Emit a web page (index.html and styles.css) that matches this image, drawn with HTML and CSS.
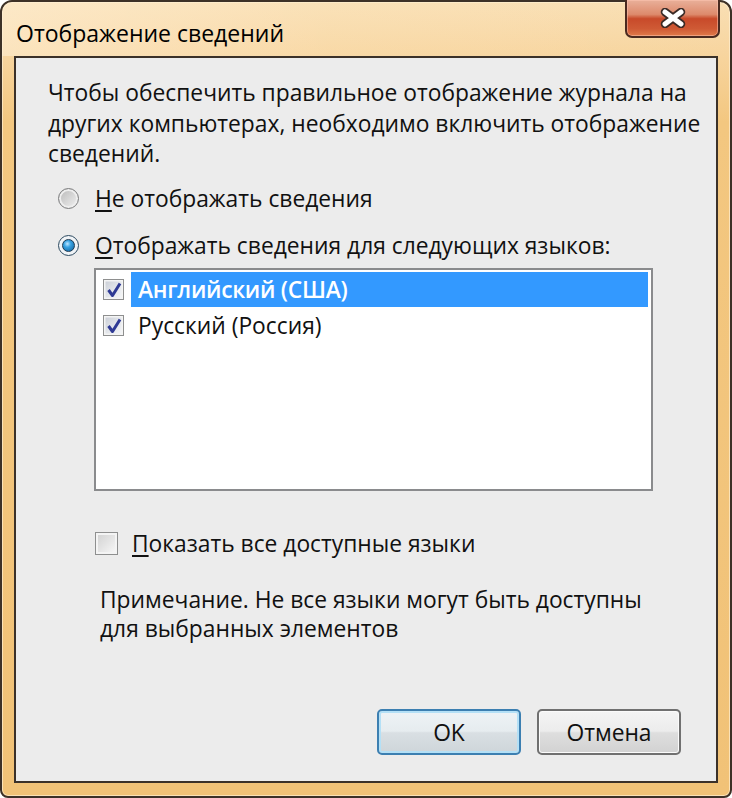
FILE: index.html
```html
<!DOCTYPE html>
<html lang="ru">
<head>
<meta charset="utf-8">
<title>Отображение сведений</title>
<link rel="stylesheet" href="styles.css">
</head>
<body>
<div class="window">
  <div class="titlebar">
    <div class="title">Отображение сведений</div>
    <div class="close">
      <svg width="28" height="20" viewBox="0 0 28 20">
        <path d="M6 4 L22 16 M22 4 L6 16" stroke="#3a2a26" stroke-width="8.5" stroke-linecap="round"/>
        <path d="M6 4 L22 16 M22 4 L6 16" stroke="#ffffff" stroke-width="5" stroke-linecap="round"/>
      </svg>
    </div>
  </div>
  <div class="client">
    <p class="intro">Чтобы обеспечить правильное отображение журнала на<br>других компьютерах, необходимо включить отображение<br>сведений.</p>
    <div class="radio-row first">
      <span class="radio"></span>
      <span class="label"><u>Н</u>е отображать сведения</span>
    </div>
    <div class="radio-row second">
      <span class="radio checked"><span class="dot"></span></span>
      <span class="label"><u>О</u>тображать сведения для следующих языков:</span>
    </div>
    <div class="listbox">
      <div class="item selected">
        <span class="cb checked"><svg width="16" height="16" viewBox="0 0 16 16"><path d="M2.5 8 L6.5 13.5 L14 1.5" fill="none" stroke="#2f3a94" stroke-width="3" stroke-linejoin="round"/></svg></span>
        <span class="item-text">Английский (США)</span>
      </div>
      <div class="item">
        <span class="cb checked"><svg width="16" height="16" viewBox="0 0 16 16"><path d="M2.5 8 L6.5 13.5 L14 1.5" fill="none" stroke="#2f3a94" stroke-width="3" stroke-linejoin="round"/></svg></span>
        <span class="item-text">Русский (Россия)</span>
      </div>
    </div>
    <div class="check-row">
      <span class="cb"></span>
      <span class="label"><u>П</u>оказать все доступные языки</span>
    </div>
    <p class="note">Примечание. Не все языки могут быть доступны<br>для выбранных элементов</p>
    <div class="buttons">
      <div class="btn default">OK</div>
      <div class="btn">Отмена</div>
    </div>
  </div>
</div>
</body>
</html>
```

FILE: styles.css
```css
html, body {
  margin: 0;
  padding: 0;
  background: #ffffff;
}
body {
  width: 732px;
  height: 798px;
  overflow: hidden;
  font-family: "Open Sans", "Noto Sans", "DejaVu Sans", sans-serif;
  font-size: 22.8px;
  color: #111;
}
.window {
  box-sizing: border-box;
  width: 732px;
  height: 798px;
  border: 2px solid #3d3127;
  border-radius: 12px 12px 8px 8px;
  background: linear-gradient(180deg, #f9dfb4 0px, #f7d49d 56px, #f3c780 120px, #f1c277 100%);
  box-shadow: inset 0 0 0 1px rgba(255,240,210,0.7);
  padding: 0 12px 13px 12px;
  display: flex;
  flex-direction: column;
}
.titlebar {
  height: 54px;
  display: flex;
  align-items: flex-start;
  background: linear-gradient(90deg, rgba(255,240,215,0.55) 0%, rgba(255,235,200,0.2) 45%, rgba(255,255,255,0) 100%);
  margin: 0 -12px;
  padding: 0 10px 0 14px;
  border-radius: 10px 10px 0 0;
}
.title {
  font-size: 23px;
  line-height: 28px;
  margin-top: 17px;
  color: #000;
}
.close {
  margin-left: auto;
  margin-top: -2px;
  width: 95px;
  height: 38px;
  box-sizing: border-box;
  border: 2px solid #4a2a20;
  border-top: none;
  border-radius: 0 0 7px 7px;
  background: linear-gradient(180deg, #e9b09a 0%, #dd8a6c 40%, #c84a2a 52%, #cf5a35 80%, #e07a4a 100%);
  box-shadow: inset 0 0 0 1px rgba(255,200,180,0.5);
  display: flex;
  align-items: center;
  justify-content: center;
}
.client {
  flex: 1;
  box-sizing: border-box;
  border: 2px solid #3b3129;
  background: #ececec;
  display: flex;
  flex-direction: column;
  padding: 20px 0 26px 0;
}
.intro {
  margin: 0 0 0 32px;
  line-height: 30.5px;
  white-space: nowrap;
}
.radio-row {
  display: flex;
  align-items: center;
  height: 30px;
  margin-left: 42px;
}
.radio-row.first { margin-top: 14px; }
.radio-row.second { margin-top: 17px; }
.radio-row .label { margin-left: 16px; }
.radio {
  box-sizing: border-box;
  width: 21px;
  height: 21px;
  border-radius: 50%;
  border: 1.5px solid #7c7d7e;
  background: linear-gradient(135deg, #b8b8b8 0%, #d2d2d2 45%, #f2f2f2 100%);
  box-shadow: inset 0 0 0 2px #eeeeee;
  display: flex;
  align-items: center;
  justify-content: center;
}
.radio.checked {
  border-color: #2c4a60;
  background: radial-gradient(circle, #e8edf2 0%, #f6f8fa 100%);
  box-shadow: none;
}
.radio .dot {
  width: 11px;
  height: 11px;
  border-radius: 50%;
  border: 1.5px solid #1c3a52;
  background: radial-gradient(circle at 40% 35%, #bfe6ff 0%, #37a2e2 35%, #0f5d98 100%);
}
u {
  text-decoration: underline;
  text-underline-offset: 3px;
  text-decoration-thickness: 1.5px;
}
.listbox {
  margin: 7px 0 0 78px;
  width: 559px;
  height: 223px;
  box-sizing: border-box;
  border: 2px solid #8a8b8d;
  background: #ffffff;
  padding: 2px 1px;
}
.item {
  display: flex;
  align-items: center;
  height: 36px;
}
.item .cb {
  margin-left: 6px;
}
.item-text {
  flex: 1;
  height: 35px;
  line-height: 35px;
  margin-left: 7px;
  padding-left: 7px;
  margin-right: 2px;
}
.item.selected .item-text {
  background: #3399ff;
  color: #ffffff;
  font-weight: 600;
  letter-spacing: -0.3px;
}
.cb {
  box-sizing: border-box;
  width: 21px;
  height: 21px;
  border: 1.5px solid #8e8f8f;
  background: linear-gradient(135deg, #d0d0d0 0%, #e4e4e4 50%, #fafafa 100%);
  box-shadow: inset 0 0 0 2px #f4f4f4;
  display: flex;
  align-items: center;
  justify-content: center;
}
.cb.checked {
  background: linear-gradient(135deg, #c8ccd4 0%, #e2e5ea 50%, #f6f7f9 100%);
  box-shadow: inset 0 0 0 1.5px #f4f4f4;
}
.check-row {
  display: flex;
  align-items: center;
  height: 30px;
  margin: 38px 0 0 79px;
}
.check-row .cb { width: 23px; height: 23px; }
.check-row .label { margin-left: 14px; }
.note {
  margin: 26px 0 0 84px;
  line-height: 29px;
  white-space: nowrap;
}
.buttons {
  margin-top: auto;
  display: flex;
  justify-content: flex-end;
  gap: 16px;
  padding-right: 35px;
}
.btn {
  box-sizing: border-box;
  width: 144px;
  height: 46px;
  border: 2px solid #707070;
  border-radius: 5px;
  background: linear-gradient(180deg, #f4f4f4 0%, #ececec 48%, #dedede 52%, #d2d2d2 100%);
  box-shadow: inset 0 0 0 1px #fbfbfb;
  display: flex;
  align-items: center;
  justify-content: center;
  color: #111;
}
.btn.default {
  border-color: #3c7fb1;
  box-shadow: inset 0 0 0 2px #b4e0f6;
  background: linear-gradient(180deg, #eef3f6 0%, #e6ecef 48%, #d9dfe3 52%, #ced5d9 100%);
}
```
